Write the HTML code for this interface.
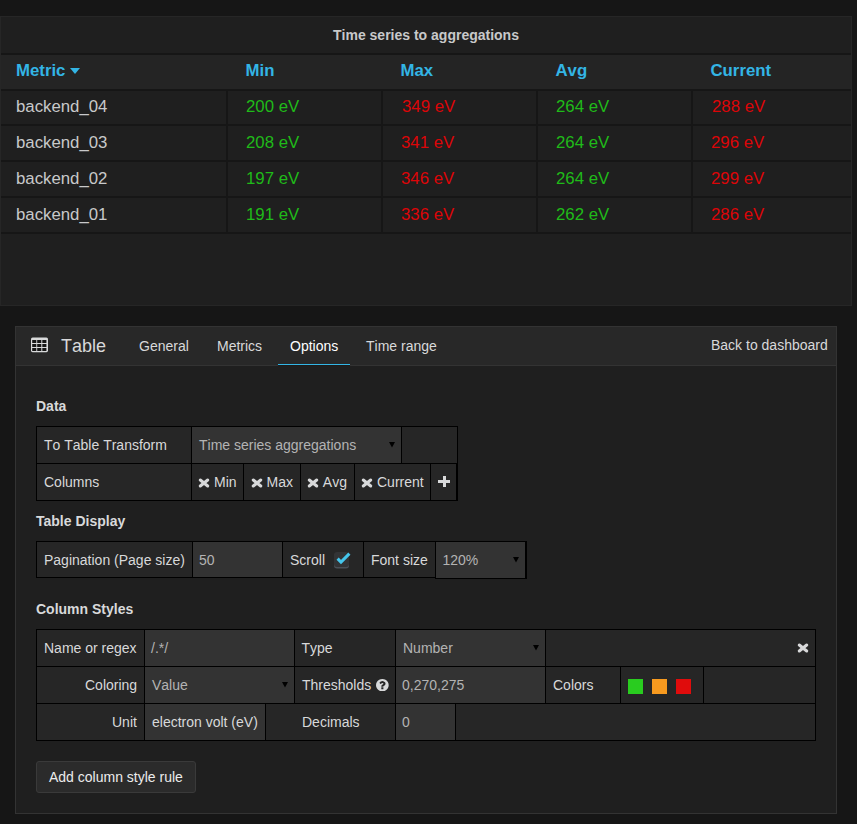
<!DOCTYPE html>
<html><head><meta charset="utf-8">
<style>
*{box-sizing:border-box;margin:0;padding:0}
html,body{width:857px;height:824px;overflow:hidden;font-kerning:none;background:#161616;font-family:"Liberation Sans",sans-serif;color:#d8d9da;font-size:14px}
.a{position:absolute}
.t{position:absolute;white-space:nowrap;line-height:1}
.th{color:#33b5e5;font-weight:bold;font-size:16.8px}
.td{font-size:16.8px;color:#c8c9ca}
.g{color:#1fba19}
.r{color:#dc0508}
.h{font-weight:bold}
.sel{color:#b3b3b3}
</style></head><body>
<div class="a" style="left:0px;top:16px;width:852px;height:290px;background:#1f1f1f;border:1px solid #262626"></div>
<div class="t h" style="left:333px;top:28px;color:#c8c9ca">Time series to aggregations</div>
<div class="a" style="left:1px;top:53px;width:850px;height:2px;background:#161616;"></div>
<div class="a" style="left:1px;top:55px;width:850px;height:34px;background:#242424;"></div>
<div class="a" style="left:1px;top:89px;width:850px;height:2px;background:#161616;"></div>
<div class="a" style="left:1px;top:124px;width:850px;height:2px;background:#161616;"></div>
<div class="a" style="left:1px;top:160px;width:850px;height:2px;background:#161616;"></div>
<div class="a" style="left:1px;top:196px;width:850px;height:2px;background:#161616;"></div>
<div class="a" style="left:1px;top:232px;width:850px;height:2px;background:#161616;"></div>
<div class="a" style="left:226px;top:91px;width:2px;height:142px;background:#161616;"></div>
<div class="a" style="left:381px;top:91px;width:2px;height:142px;background:#161616;"></div>
<div class="a" style="left:536px;top:91px;width:2px;height:142px;background:#161616;"></div>
<div class="a" style="left:691px;top:91px;width:2px;height:142px;background:#161616;"></div>
<div class="t th" style="left:16px;top:63px;">Metric</div>
<svg class="a" style="left:70px;top:67.5px" width="10" height="6" viewBox="0 0 10 6"><path d="M0 0H10L5.0 6Z" fill="#33b5e5"/></svg>
<div class="t th" style="left:245.6px;top:63px;">Min</div>
<div class="t th" style="left:400.5px;top:63px;">Max</div>
<div class="t th" style="left:555.5px;top:63px;">Avg</div>
<div class="t th" style="left:710.5px;top:63px;">Current</div>
<div class="t td" style="left:16px;top:99px;">backend_04</div>
<div class="t td g" style="left:246px;top:99px;">200 eV</div>
<div class="t td r" style="left:402px;top:99px;">349 eV</div>
<div class="t td g" style="left:556px;top:99px;">264 eV</div>
<div class="t td r" style="left:712px;top:99px;">288 eV</div>
<div class="t td" style="left:16px;top:135px;">backend_03</div>
<div class="t td g" style="left:246px;top:135px;">208 eV</div>
<div class="t td r" style="left:401px;top:135px;">341 eV</div>
<div class="t td g" style="left:556px;top:135px;">264 eV</div>
<div class="t td r" style="left:711px;top:135px;">296 eV</div>
<div class="t td" style="left:16px;top:171px;">backend_02</div>
<div class="t td g" style="left:246px;top:171px;">197 eV</div>
<div class="t td r" style="left:401px;top:171px;">346 eV</div>
<div class="t td g" style="left:556px;top:171px;">264 eV</div>
<div class="t td r" style="left:711px;top:171px;">299 eV</div>
<div class="t td" style="left:16px;top:207px;">backend_01</div>
<div class="t td g" style="left:246px;top:207px;">191 eV</div>
<div class="t td r" style="left:401px;top:207px;">336 eV</div>
<div class="t td g" style="left:556px;top:207px;">262 eV</div>
<div class="t td r" style="left:711px;top:207px;">286 eV</div>
<div class="a" style="left:15px;top:326px;width:822px;height:488px;background:#1f1f1f;border:1px solid #333"></div>
<div class="a" style="left:16px;top:327px;width:820px;height:38px;background:#282828;"></div>
<div class="a" style="left:16px;top:365px;width:820px;height:1px;background:#333;"></div>
<div class="a" style="left:278px;top:364px;width:72px;height:1px;background:#33b5e5;"></div>
<div class="a" style="left:278px;top:365px;width:72px;height:1px;background:#1c1a19;"></div>
<svg class="a" style="left:31px;top:337px" width="18" height="16" viewBox="31 337 18 16"><rect x="31" y="337.6" width="17" height="14.6" rx="1.6" fill="#d8d9da"/><rect x="32.2" y="340" width="4.1" height="3" fill="#161616"/><rect x="32.2" y="344" width="4.1" height="3" fill="#161616"/><rect x="32.2" y="348" width="4.1" height="3" fill="#161616"/><rect x="37.2" y="340" width="4.1" height="3" fill="#161616"/><rect x="37.2" y="344" width="4.1" height="3" fill="#161616"/><rect x="37.2" y="348" width="4.1" height="3" fill="#161616"/><rect x="42.3" y="340" width="4.1" height="3" fill="#161616"/><rect x="42.3" y="344" width="4.1" height="3" fill="#161616"/><rect x="42.3" y="348" width="4.1" height="3" fill="#161616"/></svg>
<div class="t " style="left:61px;top:337px;font-size:18px">Table</div>
<div class="t " style="left:139px;top:339px;">General</div>
<div class="t " style="left:217px;top:339px;">Metrics</div>
<div class="t " style="left:290px;top:339px;color:#fff">Options</div>
<div class="t " style="left:366px;top:339px;">Time range</div>
<div class="t " style="left:711px;top:338px;">Back to dashboard</div>
<div class="t h" style="left:36px;top:399px;">Data</div>
<div class="a" style="left:36px;top:426px;width:422px;height:75px;background:#000;"></div>
<div class="a" style="left:37px;top:427px;width:154px;height:36px;background:#262626;"></div>
<div class="a" style="left:192px;top:427px;width:209px;height:36px;background:#333;"></div>
<div class="a" style="left:402px;top:427px;width:55px;height:36px;background:#262626;"></div>
<div class="t " style="left:44px;top:438px;">To Table Transform</div>
<div class="t sel" style="left:199px;top:438px;">Time series aggregations</div>
<svg class="a" style="left:389px;top:442px" width="6" height="5.5" viewBox="0 0 6 5.5"><path d="M0 0H6L3.0 5.5Z" fill="#000"/></svg>
<div class="a" style="left:37px;top:464px;width:154px;height:36px;background:#262626;"></div>
<div class="a" style="left:192px;top:464px;width:51px;height:36px;background:#262626;"></div>
<div class="a" style="left:244px;top:464px;width:56px;height:36px;background:#262626;"></div>
<div class="a" style="left:301px;top:464px;width:53px;height:36px;background:#262626;"></div>
<div class="a" style="left:355px;top:464px;width:75px;height:36px;background:#262626;"></div>
<div class="a" style="left:431px;top:464px;width:25px;height:36px;background:#262626;"></div>
<div class="t " style="left:44px;top:475px;">Columns</div>
<svg class="a" style="left:196.4px;top:474.6px" width="16" height="16" viewBox="196.4 474.6 16 16"><path d="M200.70000000000002 479.65000000000003L208.1 485.55M208.1 479.65000000000003L200.70000000000002 485.55" stroke="#d8d9da" stroke-width="3.1" stroke-linecap="round"/></svg>
<div class="t " style="left:214px;top:475px;">Min</div>
<svg class="a" style="left:248.8px;top:474.6px" width="16" height="16" viewBox="248.8 474.6 16 16"><path d="M253.10000000000002 479.65000000000003L260.5 485.55M260.5 479.65000000000003L253.10000000000002 485.55" stroke="#d8d9da" stroke-width="3.1" stroke-linecap="round"/></svg>
<div class="t " style="left:266.6px;top:475px;">Max</div>
<svg class="a" style="left:304.8px;top:474.6px" width="16" height="16" viewBox="304.8 474.6 16 16"><path d="M309.1 479.65000000000003L316.5 485.55M316.5 479.65000000000003L309.1 485.55" stroke="#d8d9da" stroke-width="3.1" stroke-linecap="round"/></svg>
<div class="t " style="left:322.8px;top:475px;">Avg</div>
<svg class="a" style="left:359.1px;top:474.6px" width="16" height="16" viewBox="359.1 474.6 16 16"><path d="M363.40000000000003 479.65000000000003L370.8 485.55M370.8 479.65000000000003L363.40000000000003 485.55" stroke="#d8d9da" stroke-width="3.1" stroke-linecap="round"/></svg>
<div class="t " style="left:377px;top:475px;">Current</div>
<div class="a" style="left:438px;top:480px;width:12px;height:3px;background:#d8d9da;"></div>
<div class="a" style="left:442.5px;top:476px;width:3px;height:11px;background:#d8d9da;"></div>
<div class="t h" style="left:36px;top:514px;font-kerning:normal">Table Display</div>
<div class="a" style="left:36px;top:541px;width:490px;height:37px;background:#000;"></div>
<div class="a" style="left:435px;top:541px;width:92px;height:38px;background:#000;"></div>
<div class="a" style="left:37px;top:542px;width:155px;height:35px;background:#262626;"></div>
<div class="a" style="left:193px;top:542px;width:89px;height:35px;background:#333;"></div>
<div class="a" style="left:283px;top:542px;width:80px;height:35px;background:#262626;"></div>
<div class="a" style="left:364px;top:542px;width:71px;height:35px;background:#262626;"></div>
<div class="a" style="left:436px;top:542px;width:89px;height:36px;background:#333;"></div>
<div class="t " style="left:44px;top:553px;">Pagination (Page size)</div>
<div class="t sel" style="left:199px;top:553px;">50</div>
<div class="t " style="left:290px;top:553px;">Scroll</div>
<div class="t " style="left:371px;top:553px;">Font size</div>
<div class="t sel" style="left:442.5px;top:553px;">120%</div>
<div class="a" style="left:333.5px;top:551.5px;width:15px;height:15px;background:#323335;border-radius:3px;box-shadow:0 1.5px 0 #4b5057"></div>
<svg class="a" style="left:330px;top:548px" width="24" height="20" viewBox="330 548 24 20"><path d="M337.6 558.6L341 562.1L349.4 553.6" stroke="#45c6ec" stroke-width="3" fill="none"/></svg>
<svg class="a" style="left:513px;top:557px" width="6" height="5.5" viewBox="0 0 6 5.5"><path d="M0 0H6L3.0 5.5Z" fill="#000"/></svg>
<div class="t h" style="left:36px;top:602px;">Column Styles</div>
<div class="a" style="left:36px;top:629px;width:780px;height:112px;background:#000;"></div>
<div class="a" style="left:37px;top:630px;width:107px;height:36px;background:#262626;"></div>
<div class="a" style="left:145px;top:630px;width:149px;height:36px;background:#333;"></div>
<div class="a" style="left:295px;top:630px;width:100px;height:36px;background:#262626;"></div>
<div class="a" style="left:396px;top:630px;width:149px;height:36px;background:#333;"></div>
<div class="a" style="left:546px;top:630px;width:269px;height:36px;background:#262626;"></div>
<div class="a" style="left:37px;top:667px;width:107px;height:36px;background:#262626;"></div>
<div class="a" style="left:145px;top:667px;width:149px;height:36px;background:#333;"></div>
<div class="a" style="left:295px;top:667px;width:100px;height:36px;background:#262626;"></div>
<div class="a" style="left:396px;top:667px;width:149px;height:36px;background:#333;"></div>
<div class="a" style="left:546px;top:667px;width:74px;height:36px;background:#262626;"></div>
<div class="a" style="left:621px;top:667px;width:82px;height:36px;background:#262626;"></div>
<div class="a" style="left:704px;top:667px;width:111px;height:36px;background:#262626;"></div>
<div class="a" style="left:37px;top:704px;width:107px;height:36px;background:#262626;"></div>
<div class="a" style="left:145px;top:704px;width:120px;height:36px;background:#333;"></div>
<div class="a" style="left:266px;top:704px;width:129px;height:36px;background:#262626;"></div>
<div class="a" style="left:396px;top:704px;width:59px;height:36px;background:#333;"></div>
<div class="a" style="left:456px;top:704px;width:359px;height:36px;background:#262626;"></div>
<div class="t " style="left:44px;top:641px;">Name or regex</div>
<div class="t sel" style="left:151px;top:641px;">/.*/</div>
<div class="t " style="left:301.5px;top:641px;">Type</div>
<div class="t sel" style="left:403px;top:641px;">Number</div>
<svg class="a" style="left:533px;top:645px" width="6" height="5.5" viewBox="0 0 6 5.5"><path d="M0 0H6L3.0 5.5Z" fill="#000"/></svg>
<svg class="a" style="left:794.5px;top:640.4px" width="16" height="16" viewBox="794.5 640.4 16 16"><path d="M798.8 645.4499999999999L806.2 651.35M806.2 645.4499999999999L798.8 651.35" stroke="#d8d9da" stroke-width="3.1" stroke-linecap="round"/></svg>
<div class="t " style="left:85px;top:678px;">Coloring</div>
<div class="t sel" style="left:152px;top:678px;">Value</div>
<svg class="a" style="left:282px;top:682px" width="6" height="5.5" viewBox="0 0 6 5.5"><path d="M0 0H6L3.0 5.5Z" fill="#000"/></svg>
<div class="t " style="left:302px;top:678px;">Thresholds</div>
<svg class="a" style="left:376px;top:678.8px" width="12.7" height="12.4" viewBox="0 -1408 1536 1536" preserveAspectRatio="none"><path transform="scale(1,-1)" d="M896 160v192q0 14 -9 23t-23 9h-192q-14 0 -23 -9t-9 -23v-192q0 -14 9 -23t23 -9h192q14 0 23 9t9 23zM1152 832q0 88 -55.5 163t-138.5 116t-170 41q-243 0 -371 -213q-15 -24 8 -42l132 -100q7 -6 19 -6q16 0 25 12q53 68 86 92q34 24 86 24q48 0 85.5 -26t37.5 -59q0 -38 -20 -61t-68 -45q-63 -28 -115.5 -86.5t-52.5 -125.5v-36q0 -14 9 -23t23 -9h192q14 0 23 9t9 23q0 19 21.5 49.5t54.5 49.5q32 18 49 28.5t46 35t44.5 48t28 60.5t12.5 81zM1536 640q0 -209 -103 -385.5t-279.5 -279.5t-385.5 -103t-385.5 103t-279.5 279.5t-103 385.5t103 385.5t279.5 279.5t385.5 103t385.5 -103t279.5 -279.5t103 -385.5z" fill="#d8d9da"/></svg>
<div class="t sel" style="left:402px;top:678px;">0,270,275</div>
<div class="t " style="left:553px;top:678px;">Colors</div>
<div class="a" style="left:628px;top:679px;width:15px;height:15px;background:#29cc1f;"></div>
<div class="a" style="left:652px;top:679px;width:15px;height:15px;background:#f79a1f;"></div>
<div class="a" style="left:676px;top:679px;width:15px;height:15px;background:#e00c0c;"></div>
<div class="t " style="left:112px;top:715px;">Unit</div>
<div class="t " style="left:152px;top:715px;">electron volt (eV)</div>
<div class="t " style="left:302px;top:715px;">Decimals</div>
<div class="t sel" style="left:402px;top:715px;">0</div>
<div class="a" style="left:36px;top:761px;width:160px;height:32px;background:#2b2b2b;border:1px solid #3a3a3a;border-radius:3px"></div>
<div class="t " style="left:49px;top:770px;color:#ececec">Add column style rule</div>
</body></html>
